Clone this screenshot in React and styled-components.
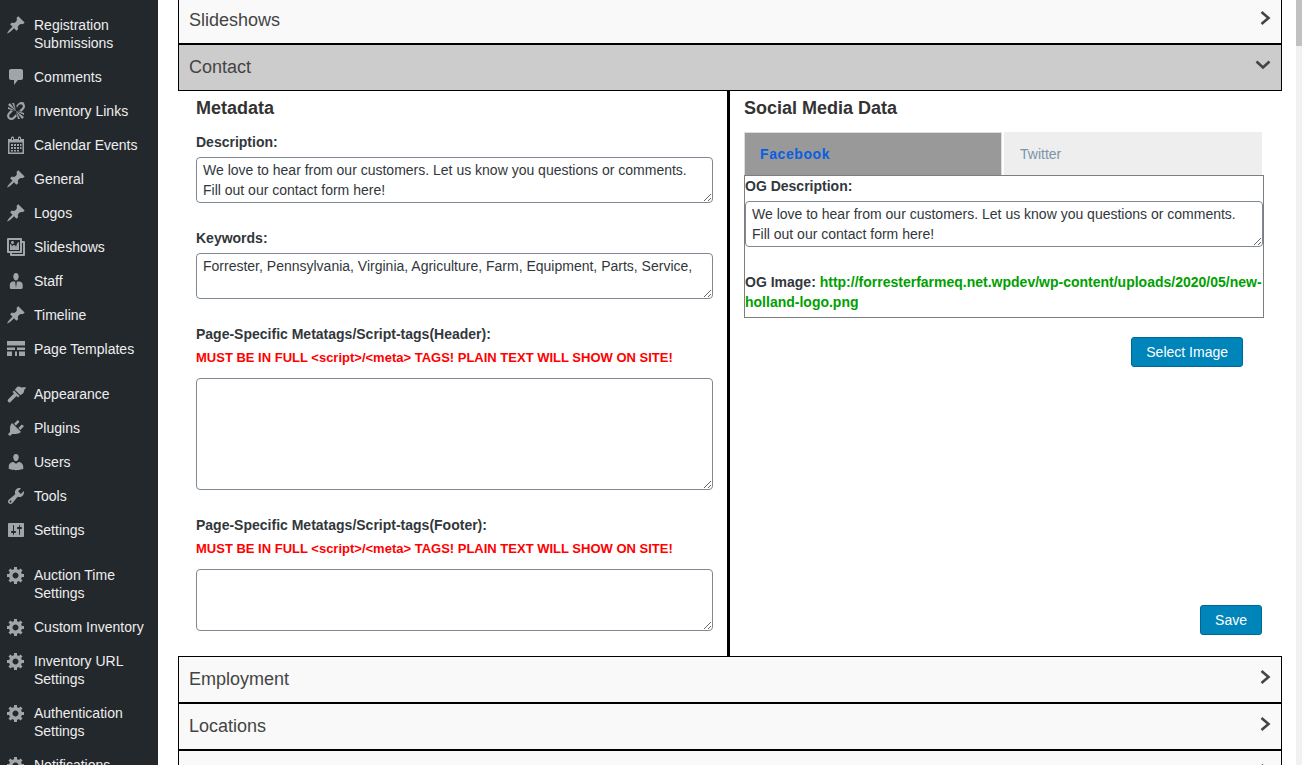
import React from 'react';
import styled, { createGlobalStyle } from 'styled-components';

const GlobalStyle = createGlobalStyle`
  html, body {
    margin: 0;
    padding: 0;
    height: 765px;
    overflow: hidden;
    background: #fff;
    font-family: "Liberation Sans", Arial, sans-serif;
  }
  * { box-sizing: border-box; }
`;

const Page = styled.div`
  display: flex;
  height: 765px;
  overflow: hidden;
  background: #fff;
`;

const Sidebar = styled.nav`
  width: 158px;
  flex: none;
  padding-top: 8px;
  background: #23282d;
`;

const MenuGroup = styled.ul`
  list-style: none;
  margin: 0 0 11px;
  padding: 0;
`;

const MenuItem = styled.li`
  display: flex;
  align-items: flex-start;
  padding: 8px 0;
  color: #eee;
  font-size: 14px;
  line-height: 18px;
`;

const MenuIcon = styled.span`
  width: 34px;
  height: 18px;
  flex: none;
  display: flex;
  align-items: center;
  padding-left: 6px;
  color: #a0a5aa;
  svg { width: 20px; height: 20px; fill: currentColor; display: block; flex: none; }
`;

const Main = styled.main`
  width: 1104px;
  margin: -3px 0 0 20px;
  flex: none;
`;

const Scrollbar = styled.div`
  width: 6px;
  height: 765px;
  margin-left: 14px;
  flex: none;
  background: #f1f1f1;
`;

const ScrollThumb = styled.div`
  height: 46px;
  background: #c1c1c1;
`;

const AccordionRow = styled.div`
  display: flex;
  align-items: center;
  justify-content: space-between;
  height: 47px;
  padding: 0 10px;
  border: 1px solid #000;
  background: ${(p) => (p.$open ? '#ccc' : '#f9f9f9')};
  color: #444;
  font-size: 18px;
  svg { display: block; margin: -6px 0 0 auto; flex: none; }
`;

const Panel = styled.div`
  display: flex;
  height: 565px;
`;

const LeftColumn = styled.section`
  width: 552px;
  flex: none;
  padding: 7px 14px 0 18px;
  border-right: 3px solid #000;
`;

const RightColumn = styled.section`
  flex: 1;
  padding: 7px 0 0 14px;
`;

const Heading = styled.h3`
  margin: 0 0 14px;
  color: #333;
  font-size: 18px;
  line-height: 20px;
  font-weight: 700;
`;

const Label = styled.div`
  margin-bottom: ${(p) => p.$gap || 5}px;
  color: #32373c;
  font-size: 14px;
  line-height: 20px;
  font-weight: 700;
`;

const Warning = styled.div`
  margin-bottom: 10px;
  color: #f00;
  font-size: 13px;
  line-height: 20px;
  font-weight: 700;
`;

const TextBox = styled.textarea`
  display: block;
  width: 100%;
  height: ${(p) => p.$h}px;
  margin: ${(p) => p.$before || 0}px 0 ${(p) => p.$after || 0}px;
  padding: 2px 6px;
  border: 1px solid #7e8993;
  border-radius: 4px;
  background: #fff;
  color: #32373c;
  font: 14px/20px "Liberation Sans", Arial, sans-serif;
  outline: none;
`;

const Tabs = styled.div`
  display: flex;
  width: 518px;
  height: 43px;
  gap: 2px;
`;

const Tab = styled.div`
  display: flex;
  align-items: center;
  width: 258px;
  padding-left: ${(p) => (p.$active ? 15 : 16)}px;
  border: ${(p) => (p.$active ? '1px solid #ddd' : '0')};
  border-bottom: 0;
  background: ${(p) => (p.$active ? '#999' : '#eee')};
  color: ${(p) => (p.$active ? '#0a5fe0' : '#7c93a8')};
  font-size: 14px;
  font-weight: ${(p) => (p.$active ? 700 : 400)};
  letter-spacing: ${(p) => (p.$active ? '0.6px' : '0')};
`;

const TabBody = styled.div`
  width: 520px;
  height: 143px;
  border: 1px solid #7e7e7e;
`;

const OgLine = styled.div`
  color: #32373c;
  font-size: 14px;
  line-height: 20px;
  font-weight: 700;
`;

const OgLink = styled.span`
  color: #00a000;
`;

const ActionRow = styled.div`
  display: flex;
  justify-content: flex-end;
  width: ${(p) => p.$w}px;
  margin-top: ${(p) => p.$top}px;
`;

const Button = styled.button`
  height: 30px;
  padding: 0 14px;
  border: 1px solid #006799;
  border-radius: 3px;
  background: #0085ba;
  color: #fff;
  font: 14px "Liberation Sans", Arial, sans-serif;
`;

const Pin = () => (
  <svg viewBox="0 0 20 20"><path d="M10.44 3.02l1.82-1.82 6.36 6.35-1.83 1.82c-1.05-.68-2.48-.57-3.41.36l-.75.75c-.92.93-1.04 2.35-.35 3.41l-1.83 1.82-2.41-2.41-2.8 2.79c-.42.42-3.38 2.71-3.8 2.29s1.86-3.39 2.28-3.81l2.79-2.79L4.1 9.36l1.83-1.82c1.05.69 2.48.57 3.41-.36l.75-.75c.93-.92 1.04-2.35.36-3.41z" /></svg>
);
const Comment = () => (
  <svg viewBox="0 0 20 20"><path d="M5 2h10c1.1 0 2 .9 2 2v7c0 1.1-.9 2-2 2h-3l-4 5v-5H5c-1.1 0-2-.9-2-2V4c0-1.1.9-2 2-2z" /></svg>
);
const Unlink = () => (
  <svg viewBox="0 0 20 20"><path d="M17.74 2.26c1.68 1.69 1.68 4.41 0 6.1l-1.53 1.52c-.32.33-.69.58-1.08.77L13 10l1.69-1.64.76-.77.76-.76c.84-.84.84-2.2 0-3.04-.84-.85-2.2-.85-3.04 0l-.77.76-.76.76L11 7l-.65-2.14c.19-.38.44-.75.77-1.07l1.52-1.53c1.69-1.68 4.42-1.68 6.1 0zM2 4l8 6-6-8zm4-2l4 8-2-8H6zM2 6l8 4-8-2V6zm7.36 7.69L10 13l.74 2.14c-.19.38-.44.75-.77 1.07l-1.52 1.53c-1.69 1.68-4.42 1.68-6.1 0-1.68-1.69-1.68-4.41 0-6.1l1.53-1.52c.32-.33.69-.58 1.08-.77L7 10l-1.69 1.64-.76.77-.76.76c-.84.84-.84 2.2 0 3.04.84.85 2.2.85 3.04 0l.77-.76.76-.76zM18 16l-8-6 6 8zm-4 2l-4-8 2 8h2zm4-4l-8-4 8 2v2z" /></svg>
);
const Calendar = () => (
  <svg viewBox="0 0 20 20"><path fillRule="evenodd" d="M15 4h3v15H2V4h3V3c0-.8.7-1.5 1.5-1.5S8 2.2 8 3v1h4V3c0-.8.7-1.5 1.5-1.5S15 2.2 15 3v1zM6 3v2h1V3H6zm7 0v2h1V3h-1zM3.5 7.5v10h13v-10h-13zM5 9h2v2H5V9zm3 0h2v2H8V9zm3 0h2v2h-2V9zm3 0h1.5v2H14V9zM5 12h2v2H5v-2zm3 0h2v2H8v-2zm3 0h2v2h-2v-2zm3 0h1.5v2H14v-2zM5 15h2v1.5H5V15zm3 0h2v1.5H8V15zm3 0h2v1.5h-2V15z" /></svg>
);
const Gallery = () => (
  <svg viewBox="0 0 20 20"><path d="M16 4h1.96c.57 0 1.04.47 1.04 1.04v12.92c0 .57-.47 1.04-1.04 1.04H5.04C4.47 19 4 18.53 4 17.96V16H2.04C1.47 16 1 15.53 1 14.96V2.04C1 1.47 1.47 1 2.04 1h12.92c.57 0 1.04.47 1.04 1.04V4zM3 14h11V3H3v11zm5-8.5C8 4.67 7.33 4 6.5 4S5 4.67 5 5.5 5.67 7 6.5 7 8 6.33 8 5.5zm2 4.5s1-5 3-5v8H4V7c2 0 2 3 2 3s.33-2 2-2 2 2 2 2zm7 7V6h-1v8.96c0 .57-.47 1.04-1.04 1.04H6v1h11z" /></svg>
);
const Staff = () => (
  <svg viewBox="0 0 20 20"><path d="M10 9.5c-2 0-2.7-3-2.7-3.9C7.3 3.7 8.3 2 10 2s2.7 1.7 2.7 3.6c0 .9-.7 3.9-2.7 3.9zM6.8 10.5h2.3l.9 6.5.9-6.5h2.3c2.1 0 3.5 1.5 3.5 3.5v2.5c0 .8-.7 1.5-1.5 1.5h-10c-.8 0-1.4-.7-1.4-1.500V14c0-2 1.400-3.500 3.500-3.500z" /></svg>
);
const Templates = () => (
  <svg viewBox="0 0 20 20"><path d="M1 2h18v4.500H1V2zm0 6.500h8v2.500H1V8.500zm10 0h8v2.500h-8V8.500zM1 12.500h5v4.500H1v-4.500zm8 0h2v4.500H9v-4.500zm4 0h6v4.500h-6v-4.500z" /></svg>
);
const Brush = () => (
  <svg viewBox="0 0 20 20"><path d="M2 15.500L8 9.500 6.500 8 8 6.500l5.500 5.500-1.500 1.500-1.500-1.500-6 6c-.7.7-1.500.7-2 0-.8-.7-1.100-1.800-.5-2.500zM8.800 5.700L11 3c2-1.500 4 .5 5 .5 1.500 0 3-.5 4 0-.5 1.500-2 2-2 3.500s-.5 2.500-3.700 4.200L8.800 5.700z" /></svg>
);
const Plug = () => (
  <svg viewBox="0 0 20 20"><path d="M13.11 4.36L9.87 7.6 8 5.73l3.24-3.24c.35-.34 1.05-.2 1.56.32.52.51.66 1.21.31 1.55zm-8 1.77l.91-1.12 9.01 9.01-1.19.84c-.71.71-2.63 1.16-3.82 1.16H6.14L4.9 17.26c-.59.59-1.54.59-2.12 0-.59-.58-.59-1.53 0-2.12l1.24-1.24v-3.88c0-1.13.4-3.19 1.09-3.89zm7.26 3.97l3.24-3.24c.34-.35 1.04-.21 1.55.31.52.51.66 1.21.31 1.55l-3.24 3.25z" /></svg>
);
const User = () => (
  <svg viewBox="0 0 20 20"><path d="M10 9.25c-2.27 0-2.73-3.44-2.73-3.44C7 4.02 7.82 2 9.97 2c2.16 0 2.98 2.02 2.71 3.81 0 0-.41 3.44-2.68 3.44zm0 2.57L12.72 10c2.39 0 4.52 2.33 4.52 4.53v2.49s-3.65 1.13-7.24 1.13c-3.65 0-7.24-1.13-7.24-1.13v-2.49c0-2.25 1.94-4.48 4.47-4.48z" /></svg>
);
const Wrench = () => (
  <svg viewBox="0 0 20 20"><path d="M16.68 9.77c-1.34 1.34-3.3 1.67-4.95.99l-5.41 6.52c-.99.99-2.59.99-3.58 0s-.99-2.59 0-3.57l6.52-5.42c-.68-1.65-.35-3.61.99-4.95 1.28-1.28 3.12-1.62 4.72-1.06l-2.89 2.89 2.82 2.82 2.86-2.87c.53 1.58.18 3.39-1.08 4.65zM3.81 16.21c.4.39 1.04.39 1.43 0 .4-.4.4-1.04 0-1.43-.39-.4-1.03-.4-1.43 0-.39.39-.39 1.03 0 1.43z" /></svg>
);
const Sliders = () => (
  <svg viewBox="0 0 20 20"><path d="M18 16V4c0-.55-.45-1-1-1H3c-.55 0-1 .45-1 1v12c0 .55.45 1 1 1h14c.55 0 1-.45 1-1zM8 11h1c.55 0 1 .45 1 1s-.45 1-1 1H8v1.5c0 .28-.22.5-.5.5s-.5-.22-.5-.5V13H6c-.55 0-1-.45-1-1s.45-1 1-1h1V5.5c0-.28.22-.5.5-.5s.5.22.5.5V11zm5-2h-1c-.55 0-1-.45-1-1s.45-1 1-1h1V5.5c0-.28.22-.5.5-.5s.5.22.5.5V7h1c.55 0 1 .45 1 1s-.45 1-1 1h-1v5.5c0 .28-.22.5-.5.5s-.5-.22-.5-.5V9z" /></svg>
);
const Gear = () => (
  <svg viewBox="0 0 20 20"><path d="M18 12h-2.18c-.17.7-.44 1.35-.81 1.93l1.54 1.54-2.1 2.1-1.54-1.54c-.58.36-1.23.63-1.91.79V19H8v-2.18c-.68-.16-1.33-.43-1.91-.79l-1.54 1.54-2.12-2.12 1.54-1.54c-.36-.58-.63-1.23-.79-1.91H1V9.03h2.17c.16-.7.44-1.35.8-1.94L2.43 5.55l2.1-2.1 1.54 1.54c.58-.37 1.24-.64 1.93-.81V2h3v2.18c.68.16 1.33.43 1.91.79l1.54-1.54 2.12 2.12-1.54 1.54c.36.59.64 1.24.8 1.94H18V12zm-8.5 1.5c1.66 0 3-1.34 3-3s-1.34-3-3-3-3 1.34-3 3 1.34 3 3 3z" /></svg>
);

const ChevronRight = () => (
  <svg width="12" height="16" viewBox="0 0 12 16"><path d="M2.5 2l7 6-7 6" fill="none" stroke="#444" strokeWidth="2.6" /></svg>
);
const ChevronDown = () => (
  <svg width="16" height="12" viewBox="0 0 16 12"><path d="M1.5 2.5L8 8.5l6.5-6" fill="none" stroke="#444" strokeWidth="2.6" /></svg>
);

const menuGroups = [
  [
    [Pin, 'Registration Submissions'],
    [Comment, 'Comments'],
    [Unlink, 'Inventory Links'],
    [Calendar, 'Calendar Events'],
    [Pin, 'General'],
    [Pin, 'Logos'],
    [Gallery, 'Slideshows'],
    [Staff, 'Staff'],
    [Pin, 'Timeline'],
    [Templates, 'Page Templates'],
  ],
  [
    [Brush, 'Appearance'],
    [Plug, 'Plugins'],
    [User, 'Users'],
    [Wrench, 'Tools'],
    [Sliders, 'Settings'],
  ],
  [
    [Gear, 'Auction Time Settings'],
    [Gear, 'Custom Inventory'],
    [Gear, 'Inventory URL Settings'],
    [Gear, 'Authentication Settings'],
    [Gear, 'Notifications'],
  ],
];

const description = 'We love to hear from our customers. Let us know you questions or comments. Fill out our contact form here!';
const warning = 'MUST BE IN FULL <script>/<meta> TAGS! PLAIN TEXT WILL SHOW ON SITE!';

const Row = ({ title, open }) => (
  <AccordionRow $open={open}>
    {title}
    {open ? <ChevronDown /> : <ChevronRight />}
  </AccordionRow>
);

const App = () => (
  <>
    <GlobalStyle />
    <Page>
      <Sidebar>
        {menuGroups.map((group, i) => (
          <MenuGroup key={i}>
            {group.map(([Icon, label]) => (
              <MenuItem key={label}>
                <MenuIcon><Icon /></MenuIcon>
                <span>{label}</span>
              </MenuItem>
            ))}
          </MenuGroup>
        ))}
      </Sidebar>
      <Main>
        <Row title="Slideshows" />
        <Row title="Contact" open />
        <Panel>
          <LeftColumn>
            <Heading>Metadata</Heading>
            <Label>Description:</Label>
            <TextBox $h={46} $after={25} readOnly value={description} />
            <Label>Keywords:</Label>
            <TextBox $h={46} $after={25} readOnly value="Forrester, Pennsylvania, Virginia, Agriculture, Farm, Equipment, Parts, Service," />
            <Label $gap={4}>Page-Specific Metatags/Script-tags(Header):</Label>
            <Warning>{warning}</Warning>
            <TextBox $h={112} $after={25} readOnly value="" />
            <Label $gap={4}>Page-Specific Metatags/Script-tags(Footer):</Label>
            <Warning>{warning}</Warning>
            <TextBox $h={62} readOnly value="" />
          </LeftColumn>
          <RightColumn>
            <Heading>Social Media Data</Heading>
            <Tabs>
              <Tab $active>Facebook</Tab>
              <Tab>Twitter</Tab>
            </Tabs>
            <TabBody>
              <OgLine>OG Description:</OgLine>
              <TextBox $h={46} $before={5} $after={25} readOnly value={description} />
              <OgLine>OG Image: <OgLink>http://forresterfarmeq.net.wpdev/wp-content/uploads/2020/05/new-holland-logo.png</OgLink></OgLine>
            </TabBody>
            <ActionRow $w={499} $top={19}><Button>Select Image</Button></ActionRow>
            <ActionRow $w={518} $top={238}><Button>Save</Button></ActionRow>
          </RightColumn>
        </Panel>
        <Row title="Employment" />
        <Row title="Locations" />
        <Row />
      </Main>
      <Scrollbar><ScrollThumb /></Scrollbar>
    </Page>
  </>
);

export default App;
